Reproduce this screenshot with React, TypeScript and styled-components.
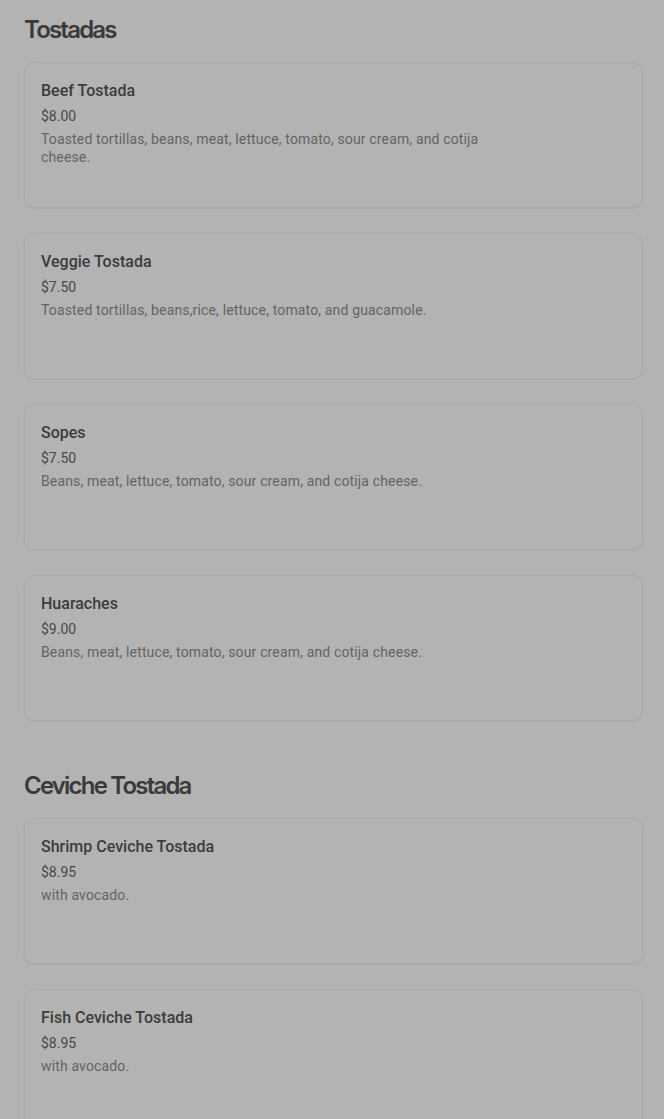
import styled, { createGlobalStyle } from 'styled-components'

const GlobalStyle = createGlobalStyle`
  body {
    margin: 0;
    background: #b3b3b3;
    font-family: Roboto, "Liberation Sans", sans-serif;
  }
`

type Item = {
  name: string
  price: string
  description: string
}

type Section = {
  title: string
  items: Item[]
}

const sections: Section[] = [
  {
    title: 'Tostadas',
    items: [
      {
        name: 'Beef Tostada',
        price: '$8.00',
        description:
          'Toasted tortillas, beans, meat, lettuce, tomato, sour cream, and cotija cheese.',
      },
      {
        name: 'Veggie Tostada',
        price: '$7.50',
        description: 'Toasted tortillas, beans,rice, lettuce, tomato, and guacamole.',
      },
      {
        name: 'Sopes',
        price: '$7.50',
        description: 'Beans, meat, lettuce, tomato, sour cream, and cotija cheese.',
      },
      {
        name: 'Huaraches',
        price: '$9.00',
        description: 'Beans, meat, lettuce, tomato, sour cream, and cotija cheese.',
      },
    ],
  },
  {
    title: 'Ceviche Tostada',
    items: [
      { name: 'Shrimp Ceviche Tostada', price: '$8.95', description: 'with avocado.' },
      { name: 'Fish Ceviche Tostada', price: '$8.95', description: 'with avocado.' },
    ],
  },
]

const Page = styled.main`
  display: flex;
  flex-direction: column;
  gap: 49px;
  padding: 14px 21px 40px 24px;
`

const MenuSection = styled.section`
  display: flex;
  flex-direction: column;
  gap: 16px;
`

const SectionTitle = styled.h2`
  margin: 0;
  font-family: Inter, "Liberation Sans", sans-serif;
  font-size: 24px;
  line-height: 32px;
  font-weight: 600;
  letter-spacing: -1.8px;
  color: #3a3a3a;
`

const CardList = styled.div`
  display: flex;
  flex-direction: column;
  gap: 25px;
`

const Card = styled.article`
  box-sizing: border-box;
  min-height: 146px;
  padding: 17px 16px 16px 16px;
  border: 1px solid #aaaaaa;
  border-radius: 10px;
  box-shadow: 0 1px 2px rgba(0, 0, 0, 0.05);
  display: flex;
  flex-direction: column;
`

const ItemName = styled.h3`
  margin: 0;
  font-size: 16px;
  line-height: 22px;
  font-weight: 500;
  color: #3c3c3c;
`

const Price = styled.p`
  margin: 4px 0 0;
  font-size: 14px;
  line-height: 20px;
  color: #484848;
`

const Description = styled.p`
  margin: 4px 0 0;
  max-width: 460px;
  font-size: 14px;
  line-height: 18px;
  letter-spacing: 0.15px;
  color: #646464;
`

export default function App() {
  return (
    <>
      <GlobalStyle />
      <Page>
        {sections.map((section) => (
          <MenuSection key={section.title}>
            <SectionTitle>{section.title}</SectionTitle>
            <CardList>
              {section.items.map((item) => (
                <Card key={item.name}>
                  <ItemName>{item.name}</ItemName>
                  <Price>{item.price}</Price>
                  <Description>{item.description}</Description>
                </Card>
              ))}
            </CardList>
          </MenuSection>
        ))}
      </Page>
    </>
  )
}
